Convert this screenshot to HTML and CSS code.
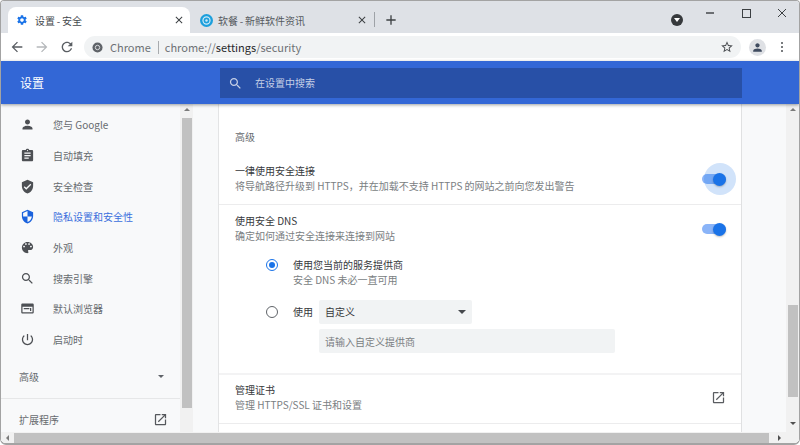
FILE: index.html
```html
<!DOCTYPE html>
<html lang="zh-CN">
<head>
<meta charset="utf-8">
<title>设置 - 安全</title>
<link rel="stylesheet" href="styles.css">
</head>
<body>
<svg class="defs" width="0" height="0">
  <symbol id="i-person" viewBox="0 0 24 24"><path d="M12 12c2.21 0 4-1.79 4-4s-1.79-4-4-4-4 1.79-4 4 1.79 4 4 4zm0 2c-2.67 0-8 1.34-8 4v2h16v-2c0-2.66-5.33-4-8-4z"/></symbol>
  <symbol id="i-assign" viewBox="0 0 24 24"><path d="M19 3h-4.18C14.4 1.84 13.3 1 12 1c-1.3 0-2.4.84-2.82 2H5c-1.1 0-2 .9-2 2v14c0 1.1.9 2 2 2h14c1.1 0 2-.9 2-2V5c0-1.1-.9-2-2-2zm-7 0c.55 0 1 .45 1 1s-.45 1-1 1-1-.45-1-1 .45-1 1-1zm2 14H7v-2h7v2zm3-4H7v-2h10v2zm0-4H7V7h10v2z"/></symbol>
  <symbol id="i-verified" viewBox="0 0 24 24"><path d="M12 1L3 5v6c0 5.55 3.84 10.74 9 12 5.16-1.26 9-6.45 9-12V5l-9-4zm-2 16l-4-4 1.41-1.41L10 14.17l6.59-6.59L18 9l-8 8z"/></symbol>
  <symbol id="i-shield" viewBox="0 0 24 24"><path d="M12 1L3 5v6c0 5.55 3.84 10.74 9 12 5.16-1.26 9-6.45 9-12V5l-9-4zm0 10.99h7c-.53 4.12-3.28 7.79-7 8.94V12H5V6.3l7-3.11v8.8z"/></symbol>
  <symbol id="i-palette" viewBox="0 0 24 24"><path d="M12 3c-4.97 0-9 4.03-9 9s4.03 9 9 9c.83 0 1.5-.67 1.5-1.5 0-.39-.15-.74-.39-1.01-.23-.26-.38-.61-.38-.99 0-.83.67-1.5 1.5-1.5H16c2.76 0 5-2.24 5-5 0-4.42-4.03-8-9-8zm-5.5 9c-.83 0-1.5-.67-1.5-1.5S5.67 9 6.5 9 8 9.67 8 10.5 7.33 12 6.5 12zm3-4C8.67 8 8 7.33 8 6.5S8.67 5 9.5 5s1.5.67 1.5 1.5S10.33 8 9.5 8zm5 0c-.83 0-1.5-.67-1.5-1.5S13.67 5 14.5 5s1.5.67 1.5 1.5S15.33 8 14.5 8zm3 4c-.83 0-1.5-.67-1.5-1.5S16.67 9 17.5 9s1.5.67 1.5 1.5-.67 1.5-1.5 1.5z"/></symbol>
  <symbol id="i-search" viewBox="0 0 24 24"><path d="M15.5 14h-.79l-.28-.27C15.41 12.59 16 11.11 16 9.5 16 5.91 13.09 3 9.5 3S3 5.91 3 9.5 5.91 16 9.5 16c1.61 0 3.09-.59 4.23-1.57l.27.28v.79l5 4.99L20.49 19l-4.99-5zm-6 0C7.01 14 5 11.99 5 9.5S7.01 5 9.5 5 14 7.01 14 9.5 11.99 14 9.5 14z"/></symbol>
  <symbol id="i-web" viewBox="0 0 24 24"><path d="M20 4H4c-1.1 0-2 .9-2 2v12c0 1.1.9 2 2 2h16c1.1 0 2-.9 2-2V6c0-1.1-.9-2-2-2zm0 14H4V9h16v9zM6 11h9v2H6zm10 0h2v5h-2z"/></symbol>
  <symbol id="i-power" viewBox="0 0 24 24"><path d="M13 3h-2v10h2V3zm4.83 2.17l-1.42 1.42C17.99 7.86 19 9.81 19 12c0 3.87-3.13 7-7 7s-7-3.13-7-7c0-2.19 1.01-4.14 2.58-5.42L6.17 5.17C4.23 6.82 3 9.26 3 12c0 4.97 4.03 9 9 9s9-4.03 9-9c0-2.74-1.23-5.18-3.17-6.83z"/></symbol>
  <symbol id="i-open" viewBox="0 0 24 24"><path d="M19 19H5V5h7V3H5c-1.11 0-2 .9-2 2v14c0 1.1.89 2 2 2h14c1.1 0 2-.9 2-2v-7h-2v7zM14 3v2h3.59l-9.83 9.83 1.41 1.41L19 6.41V10h2V3h-7z"/></symbol>
  <symbol id="i-gear" viewBox="0 0 24 24"><path d="M19.14 12.94c.04-.3.06-.61.06-.94 0-.32-.02-.64-.07-.94l2.03-1.58a.49.49 0 0 0 .12-.61l-1.92-3.32a.488.488 0 0 0-.59-.22l-2.39.96c-.5-.38-1.03-.7-1.62-.94l-.36-2.54a.484.484 0 0 0-.48-.41h-3.84c-.24 0-.43.17-.47.41l-.36 2.54c-.59.24-1.13.57-1.62.94l-2.39-.96c-.22-.08-.47 0-.59.22L2.74 8.87c-.12.21-.08.47.12.61l2.03 1.58c-.05.3-.09.63-.09.94s.02.64.07.94l-2.03 1.58a.49.49 0 0 0-.12.61l1.92 3.32c.12.22.37.29.59.22l2.39-.96c.5.38 1.03.7 1.62.94l.36 2.54c.05.24.24.41.48.41h3.84c.24 0 .44-.17.47-.41l.36-2.54c.59-.24 1.13-.56 1.62-.94l2.39.96c.22.08.47 0 .59-.22l1.92-3.32c.12-.22.07-.47-.12-.61l-2.01-1.58zM12 15.6c-1.98 0-3.6-1.62-3.6-3.6s1.62-3.6 3.6-3.6 3.6 1.62 3.6 3.6-1.62 3.6-3.6 3.6z"/></symbol>
  <symbol id="i-close" viewBox="0 0 24 24"><path d="M19 6.41L17.59 5 12 10.59 6.41 5 5 6.41 10.59 12 5 17.59 6.41 19 12 13.41 17.59 19 19 17.59 13.41 12z"/></symbol>
  <symbol id="i-back" viewBox="0 0 24 24"><path d="M20 11H7.83l5.59-5.59L12 4l-8 8 8 8 1.41-1.41L7.83 13H20v-2z"/></symbol>
  <symbol id="i-forward" viewBox="0 0 24 24"><path d="M12 4l-1.41 1.41L16.17 11H4v2h12.17l-5.58 5.59L12 20l8-8z"/></symbol>
  <symbol id="i-reload" viewBox="0 0 24 24"><path d="M17.65 6.35C16.2 4.9 14.21 4 12 4c-4.42 0-7.99 3.58-7.99 8s3.57 8 7.99 8c3.73 0 6.84-2.55 7.73-6h-2.08c-.82 2.33-3.04 4-5.65 4-3.31 0-6-2.69-6-6s2.69-6 6-6c1.66 0 3.14.69 4.22 1.78L13 11h7V4l-2.35 2.35z"/></symbol>
  <symbol id="i-star" viewBox="0 0 24 24"><path d="M22 9.24l-7.19-.62L12 2 9.19 8.63 2 9.24l5.46 4.73L5.82 21 12 17.27 18.18 21l-1.63-7.03L22 9.24zM12 15.4l-3.76 2.27 1-4.28-3.32-2.88 4.38-.38L12 6.1l1.71 4.04 4.38.38-3.32 2.88 1 4.28L12 15.4z"/></symbol>
  <symbol id="i-plus" viewBox="0 0 24 24"><path d="M19 13h-6v6h-2v-6H5v-2h6V5h2v6h6v2z"/></symbol>
</svg>

<div class="window">
  <div class="tabstrip">
    <div class="tab tab-active">
      <svg class="ico-tab ico-blue"><use href="#i-gear"/></svg>
      <span class="tab-title">设置 - 安全</span>
      <svg class="ico-x"><use href="#i-close"/></svg>
    </div>
    <div class="tab tab-second">
      <svg class="ico-tab ico-fav" viewBox="0 0 14 14"><circle cx="7" cy="7" r="7" fill="#1c9fdc"/><circle cx="7" cy="7" r="3.8" fill="none" stroke="#cfeaf7" stroke-width="1.3"/><circle cx="7" cy="7" r="1.3" fill="#cfeaf7"/></svg>
      <span class="tab-title">软餐 - 新鲜软件资讯</span>
      <svg class="ico-x"><use href="#i-close"/></svg>
    </div>
    <span class="tab-sep"></span>
    <svg class="ico-plus"><use href="#i-plus"/></svg>
    <span class="strip-fill"></span>
    <span class="media-badge"><span class="media-arrow"></span></span>
    <div class="winctl">
      <span class="ctl"><span class="ctl-min"></span></span>
      <span class="ctl"><span class="ctl-max"></span></span>
      <span class="ctl"><svg class="ctl-close" viewBox="0 0 10 10"><path d="M1 1l8 8M9 1l-8 8"/></svg></span>
    </div>
  </div>

  <div class="toolbar">
    <svg class="tool"><use href="#i-back"/></svg>
    <svg class="tool tool-off"><use href="#i-forward"/></svg>
    <svg class="tool"><use href="#i-reload"/></svg>
    <div class="omnibox">
      <svg class="chrome-ico" viewBox="0 0 12 12"><circle cx="6" cy="6" r="5.5" fill="#5f6368"/><circle cx="6" cy="6" r="2.4" fill="#5f6368" stroke="#e4e6e8" stroke-width="1"/></svg>
      <span class="omni-origin">Chrome</span>
      <span class="omni-sep"></span>
      <span class="omni-url">chrome://<b class="omni-host">settings</b>/security</span>
      <span class="strip-fill"></span>
      <svg class="ico-star"><use href="#i-star"/></svg>
    </div>
    <span class="avatar"><svg class="avatar-ico"><use href="#i-person"/></svg></span>
    <span class="kebab"><i></i><i></i><i></i></span>
  </div>

  <header class="appbar">
    <div class="appbar-title">设置</div>
    <div class="searchbox">
      <svg class="search-ico"><use href="#i-search"/></svg>
      <span class="search-text">在设置中搜索</span>
    </div>
  </header>

  <div class="body-row">
    <div class="content-row">
      <nav class="sidebar">
        <a class="nav-item"><svg class="nav-ico"><use href="#i-person"/></svg>您与 Google</a>
        <a class="nav-item"><svg class="nav-ico"><use href="#i-assign"/></svg>自动填充</a>
        <a class="nav-item"><svg class="nav-ico"><use href="#i-verified"/></svg>安全检查</a>
        <a class="nav-item nav-active"><svg class="nav-ico"><use href="#i-shield"/></svg>隐私设置和安全性</a>
        <a class="nav-item"><svg class="nav-ico"><use href="#i-palette"/></svg>外观</a>
        <a class="nav-item"><svg class="nav-ico"><use href="#i-search"/></svg>搜索引擎</a>
        <a class="nav-item"><svg class="nav-ico"><use href="#i-web"/></svg>默认浏览器</a>
        <a class="nav-item"><svg class="nav-ico"><use href="#i-power"/></svg>启动时</a>
        <div class="nav-adv"><span>高级</span><span class="tri-down"></span></div>
        <div class="nav-ext"><span>扩展程序</span><svg class="nav-ext-ico"><use href="#i-open"/></svg></div>
      </nav>
      <div class="vscroll vscroll-side">
        <span class="arrow-up"></span>
        <span class="thumb thumb-side"></span>
      </div>
      <main class="page">
        <section class="card">
          <h2 class="card-head">高级</h2>
          <div class="row row-first">
            <div class="row-text">
              <div class="t1">一律使用安全连接</div>
              <div class="t2">将导航路径升级到 HTTPS，并在加载不支持 HTTPS 的网站之前向您发出警告</div>
            </div>
            <span class="toggle"><span class="halo"></span><span class="knob"></span></span>
          </div>
          <div class="row row-dns">
            <div class="row-text">
              <div class="t1">使用安全 DNS</div>
              <div class="t2">确定如何通过安全连接来连接到网站</div>
            </div>
            <span class="toggle"><span class="knob"></span></span>
          </div>
          <div class="options">
            <div class="option">
              <span class="radio radio-on"></span>
              <div>
                <div class="t1">使用您当前的服务提供商</div>
                <div class="t2">安全 DNS 未必一直可用</div>
              </div>
            </div>
            <div class="option option-custom">
              <span class="radio"></span>
              <div class="custom-body">
                <span class="t1 custom-label">使用</span>
                <div class="custom-fields">
                  <div class="select"><span class="select-text">自定义</span><span class="tri-down tri-dark"></span></div>
                  <div class="input">请输入自定义提供商</div>
                </div>
              </div>
            </div>
          </div>
          <div class="row row-cert">
            <div class="row-text">
              <div class="t1">管理证书</div>
              <div class="t2">管理 HTTPS/SSL 证书和设置</div>
            </div>
            <svg class="cert-ico"><use href="#i-open"/></svg>
          </div>
        </section>
      </main>
      <div class="vscroll vscroll-main">
        <span class="arrow-up"></span>
        <span class="thumb thumb-main"></span>
        <span class="arrow-down"></span>
      </div>
    </div>
    <div class="hscroll">
      <span class="arrow-left"></span>
      <span class="thumb-h"></span>
      <span class="arrow-right"></span>
    </div>
  </div>
</div>
</body>
</html>
```
FILE: styles.css
```css
* { box-sizing: border-box; }
html, body { margin: 0; padding: 0; }
body {
  width: 800px; height: 445px; overflow: hidden; background: #fff;
  font-family: "Noto Sans CJK SC", "Noto Sans", sans-serif;
  font-size: 10px; color: #5f6368;
}
.defs { position: absolute; }
svg { fill: currentColor; display: block; flex: none; }

.window {
  width: 800px; height: 445px; display: flex; flex-direction: column;
  border: 1px solid #a3a3a3; border-bottom-width: 2px; border-radius: 4px 4px 6px 6px; overflow: hidden;
}

/* tab strip */
.tabstrip {
  height: 32px; background: #dee1e6; display: flex; align-items: flex-end;
  padding-left: 7px; flex: none;
}
.tab {
  width: 182px; height: 26px; display: flex; align-items: center;
  padding: 0 5px 0 10px; color: #55595e; font-size: 10px;
  border-radius: 8px 8px 0 0;
}
.tab-active { background: #fff; padding-left: 8px; color: #45494e; }
.tab-second { width: 183px; }
.ico-tab { width: 12px; height: 12px; margin-right: 6px; }
.tab-active .ico-tab { margin-right: 7px; }
.ico-fav { width: 13px; height: 13px; margin-left: -0.5px; margin-right: 5.5px; }
.ico-blue { color: #1a73e8; }
.tab-title { flex: 1; white-space: nowrap; word-spacing: -0.5px; }
.ico-x { width: 12px; height: 12px; color: #3c4043; }
.tab-sep { width: 1px; height: 15px; background: #9ea2a7; margin: 0 0 6px 1px; }
.ico-plus { width: 16px; height: 16px; color: #3c4043; margin: 0 0 5px 8px; }
.strip-fill { flex: 1; }
.media-badge {
  width: 12px; height: 12px; border-radius: 50%; background: #36393c;
  margin: 0 9px 7px 0; display: flex; align-items: center; justify-content: center;
}
.media-arrow { border: 3px solid transparent; border-top: 4px solid #fff; border-bottom: 0; }
.winctl { display: flex; align-self: flex-start; margin-right: -1px; }
.ctl { width: 36px; height: 24px; display: flex; align-items: center; justify-content: center; }
.ctl-min { width: 8px; height: 2px; background: #6b6e72; }
.ctl-max { width: 9px; height: 9px; border: 1px solid #3c4043; }
.ctl-close { width: 10px; height: 10px; fill: none; stroke: #3c4043; stroke-width: 1; }

/* toolbar */
.toolbar {
  height: 28px; background: #fff; display: flex; align-items: center;
  padding-left: 8px; flex: none;
}
.tool { width: 16px; height: 16px; margin-right: 9px; color: #5a5e63; }
.tool-off { color: #b5b8bb; }
.omnibox {
  width: 657px; height: 22px; border-radius: 11px; background: #f1f3f4;
  display: flex; align-items: center; padding: 0 7px 0 8px;
  font-size: 11px; color: #6d7175; white-space: nowrap;
}
.chrome-ico { width: 11px; height: 11px; margin-right: 7px; }
.omni-sep { width: 1px; height: 13px; background: #a8abae; margin: 0 6px 0 7px; }
.omni-host { font-weight: 400; color: #27292b; }
.ico-star { width: 14px; height: 14px; color: #4a4d51; }
.avatar {
  width: 17px; height: 17px; border-radius: 50%; background: #dfe1e5; color: #3f4b5f;
  margin-left: 8px; display: flex; align-items: center; justify-content: center;
}
.avatar-ico { width: 13px; height: 13px; }
.kebab { display: flex; flex-direction: column; gap: 2.3px; margin-left: 15px; }
.kebab i { width: 2px; height: 2px; background: #4d5054; border-radius: 50%; display: block; }

/* app bar */
.appbar {
  height: 43px; background: #3367d6; display: flex; align-items: center; flex: none;
  position: relative; z-index: 1; box-shadow: 0 1px 3px rgba(60, 64, 67, .5);
}
.appbar-title { width: 219px; padding-left: 19px; color: #fff; font-size: 12px; }
.searchbox {
  width: 522px; height: 30px; background: #2850a7; color: #c5cfe6;
  display: flex; align-items: center; padding-left: 8px; gap: 11px; margin-top: 1px;
}
.search-text { padding-bottom: 2px; padding-left: 1px; }
.search-ico { width: 15px; height: 15px; color: #c5cfe6; }

/* body */
.body-row { flex: 1; min-height: 0; display: flex; flex-direction: column; background: #f8f9fa; }
.content-row { flex: 1; min-height: 0; display: flex; overflow: hidden; }

.sidebar { width: 179px; flex: none; padding-top: 5.5px; overflow: hidden; }
.nav-item {
  height: 30.7px; display: flex; align-items: center; padding-left: 19px; gap: 18px;
  color: #676b6f; white-space: nowrap;
}
.nav-ico { width: 15px; height: 15px; color: #4d5054; }
.nav-active { color: #3a6fdd; }
.nav-active .nav-ico { color: #1a62dd; }
.nav-adv {
  height: 30px; margin-top: 6px; display: flex; align-items: center; color: #676b6f;
  justify-content: space-between; padding: 0 16px 0 18px; border: 0;
}
.tri-down { width: 0; height: 0; border: 3.5px solid transparent; border-top: 3.5px solid #5f6368; border-bottom: 0; }
.tri-dark { border-top-color: #45484c; border-width: 4px; border-bottom: 0; }
.nav-ext {
  margin-top: 7px; height: 42px; border-top: 1px solid #e6e7e8; display: flex; align-items: center; color: #676b6f;
  justify-content: space-between; padding: 0 12px 0 18px;
}
.nav-ext-ico { width: 15px; height: 15px; color: #55585c; }

.vscroll { flex: none; background: #f1f1f1; display: flex; flex-direction: column; align-items: center; position: relative; }
.vscroll-side { width: 13px; padding: 4px 1px 0; }
.vscroll-main { width: 13px; padding: 4px 1px 0; }
.arrow-up { width: 0; height: 0; border: 3px solid transparent; border-bottom: 3px solid #7b7b7b; border-top: 0; flex: none; }
.arrow-down { width: 0; height: 0; border: 3px solid transparent; border-top: 3px solid #505050; border-bottom: 0; flex: none; margin-top: 25px; }
.thumb { width: 10px; background: #c1c1c1; flex: none; }
.thumb-side { height: 290px; margin-top: 7px; }
.thumb-main { height: 92px; margin-top: 194px; }

.page { flex: 1; min-width: 0; padding: 0 44px 0 25px; overflow: hidden; }
.card {
  background: #fff; border-left: 1px solid #e3e4e5; border-right: 1px solid #e0e1e2;
  min-height: 100%; font-size: 10px;
}
.card-head { margin: 0; height: 50px; padding: 25px 0 0 16px; font-size: 10px; line-height: 16px; font-weight: 400; color: #676b6f; }
.row { display: flex; align-items: center; justify-content: space-between; padding: 0 15px 0 16px; }
.row-first { padding-top: 9px; padding-bottom: 11px; }
.row-dns { border-top: 1px solid #ececed; padding-top: 8px; padding-bottom: 1px; }
.row-cert { border-top: 2px solid #f3f3f4; border-bottom: 1px solid #ececed; padding-top: 7px; padding-bottom: 11px; }
.t1 { line-height: 15px; color: #36383b; }
.t2 { line-height: 15px; color: #7a7e82; white-space: nowrap; }

.toggle { width: 24px; height: 10px; border-radius: 5px; background: #8ab4f8; position: relative; margin-top: 2px; }
.knob { position: absolute; right: 0; top: -1.5px; width: 13px; height: 13px; border-radius: 50%; background: #1a73e8; box-shadow: 0 1px 2px rgba(0,0,0,.25); }
.halo { position: absolute; right: -9.5px; top: -11px; width: 32px; height: 32px; border-radius: 50%; background: rgba(26, 115, 232, .2); }

.options { padding: 13px 0 20px 47px; }
.option { display: flex; align-items: flex-start; gap: 15px; }
.option-custom { margin-top: 13px; }
.radio { width: 12px; height: 12px; border-radius: 50%; border: 1.5px solid #5f6368; flex: none; margin-top: 1.5px; display: flex; align-items: center; justify-content: center; }
.radio-on { border-color: #1a73e8; }
.radio-on::after { content: ""; width: 6px; height: 6px; border-radius: 50%; background: #1a73e8; }
.option-custom .radio { margin-top: 6px; }
.custom-body { display: flex; gap: 6px; align-items: flex-start; }
.custom-label { line-height: 24px; }
.custom-fields { display: flex; flex-direction: column; gap: 5px; }
.select {
  width: 153px; height: 24px; background: #f1f3f4; border-radius: 2px; display: flex;
  align-items: center; justify-content: space-between; padding: 0 6px 0 6px; color: #36383b;
}
.select-text { padding-bottom: 2px; }
.input { width: 296px; height: 24px; background: #f1f3f4; border-radius: 2px; display: flex; align-items: center; padding-left: 6px; color: #7a7e82; }
.cert-ico { width: 15px; height: 15px; color: #5a5d61; }

.hscroll { height: 11px; flex: none; background: #f1f1f1; display: flex; align-items: center; }
.arrow-left { border: 3px solid transparent; border-right: 3px solid #7b7b7b; border-left: 0; margin-left: 5px; }
.thumb-h { width: 755px; height: 10px; background: #c1c1c1; margin-left: 5px; }
.arrow-right { border: 3px solid transparent; border-left: 3px solid #505050; border-right: 0; margin-left: 9px; }
```
